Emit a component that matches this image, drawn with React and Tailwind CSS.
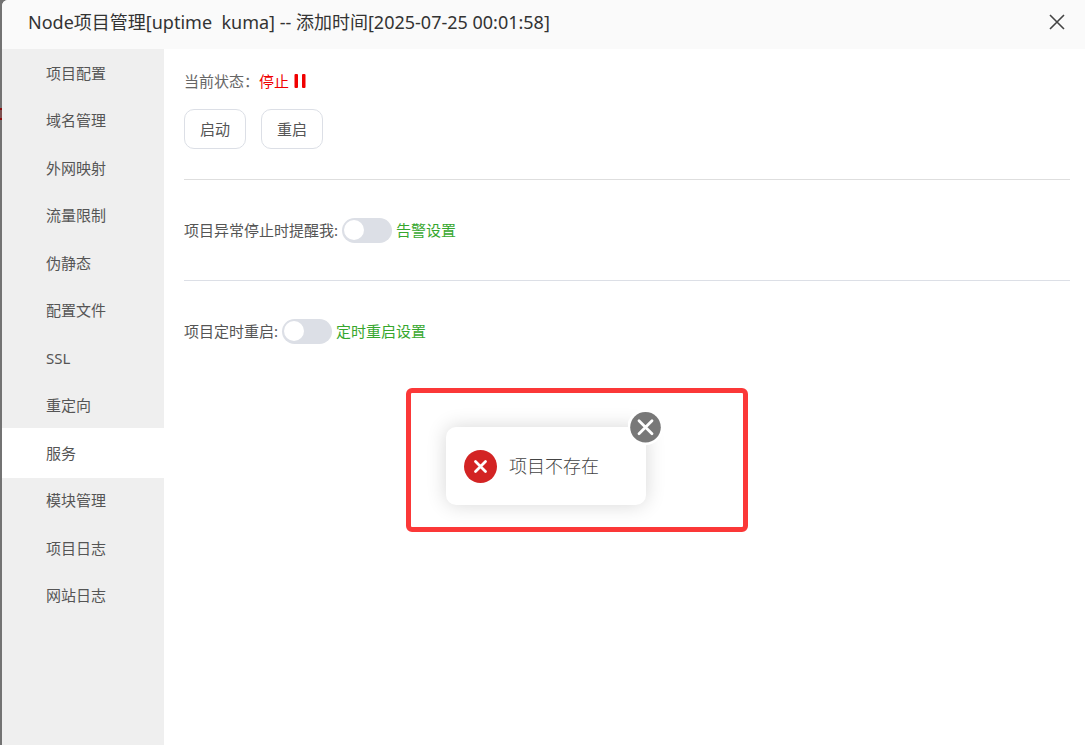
import { useState } from 'react';

const menuItems = [
    '项目配置',
    '域名管理',
    '外网映射',
    '流量限制',
    '伪静态',
    '配置文件',
    'SSL',
    '重定向',
    '服务',
    '模块管理',
    '项目日志',
    '网站日志',
];

function SwitchRow({ id, label, linkText }) {
    const [checked, setChecked] = useState(false);

    return (
        <div className="flex h-[100px] items-center gap-1">
            <label htmlFor={id}>{label}</label>
            <span className="relative flex h-[25px] w-[50px]">
                <input
                    id={id}
                    type="checkbox"
                    checked={checked}
                    onChange={(e) => setChecked(e.target.checked)}
                    className="peer h-full w-full cursor-pointer appearance-none rounded-full bg-[#dcdfe6] checked:bg-[#20a53a]"
                />
                <span className="pointer-events-none absolute top-[2px] left-[2px] h-5 w-5 rounded-full bg-white peer-checked:left-7" />
            </span>
            <a href="#" className="text-[#36a72e]">
                {linkText}
            </a>
        </div>
    );
}

function Toast({ message }) {
    return (
        <div
            role="alert"
            className="relative flex h-[78px] w-[200px] items-center gap-3 rounded-[10px] bg-white pl-[18px] shadow-[0_0_20px_rgba(0,0,0,0.16)]"
        >
            <svg viewBox="0 0 33 33" className="h-[33px] w-[33px]" aria-hidden="true">
                <circle cx="16.5" cy="16.5" r="16.5" fill="#d32424" />
                <path d="M11.5 11.5l10 10M21.5 11.5l-10 10" stroke="#fff" strokeWidth="2.8" strokeLinecap="round" />
            </svg>
            <span className="text-[18px] leading-6 font-light text-[#444]">{message}</span>
            <button type="button" aria-label="关闭提示" className="absolute -top-[18px] -right-[18px] cursor-pointer">
                <svg viewBox="0 0 36 36" className="h-9 w-9">
                    <circle cx="17.5" cy="18" r="18" fill="#fff" />
                    <circle cx="17.5" cy="18.3" r="15.3" fill="#787878" />
                    <path d="M11 11.8l13 13M24 11.8l-13 13" stroke="#fff" strokeWidth="2.8" strokeLinecap="round" />
                </svg>
            </button>
        </div>
    );
}

export default function App() {
    const [active, setActive] = useState('服务');

    return (
        <div className="relative min-h-screen bg-[#737373] pl-[2px] font-['Noto_Sans','Noto_Sans_CJK_SC',sans-serif] text-[15px] leading-5 text-[#555]">
            {/* edge of the page behind the dialog */}
            <span className="absolute top-[108px] left-0 h-3 w-[2px] border-y-2 border-[#8a1010] bg-[#7d5050]" />

            <div className="flex min-h-screen flex-col overflow-hidden rounded-tl-md bg-white">
                <header className="flex h-[49px] items-center justify-between bg-[#fafafa] pr-5 pb-[6px] pl-[26px]">
                    <h1 className="text-[18px] leading-6 whitespace-pre text-[#333]">
                        Node项目管理[uptime  kuma] -- 添加时间[2025-07-25 00:01:58]
                    </h1>
                    <button type="button" aria-label="关闭" className="cursor-pointer">
                        <svg viewBox="0 0 16 16" className="h-4 w-4">
                            <path d="M1 1l14 14M15 1L1 15" stroke="#444" strokeWidth="1.6" />
                        </svg>
                    </button>
                </header>

                <div className="flex flex-1">
                    <nav className="w-[162px] shrink-0 bg-[#efefef]">
                        <div className="grid h-[570px] auto-rows-fr">
                            {menuItems.map((item) => (
                                <button
                                    key={item}
                                    type="button"
                                    onClick={() => setActive(item)}
                                    className={`cursor-pointer pl-11 text-left ${active === item ? '-my-px bg-white' : ''}`}
                                >
                                    {item}
                                </button>
                            ))}
                        </div>
                    </nav>

                    <main className="flex-1 pt-[22px] pr-[15px] pl-5">
                        <p className="flex items-center text-[#666]">
                            当前状态：
                            <span className="flex items-center gap-[5px] text-[#f00000]">
                                停止
                                <svg viewBox="0 0 12 14" className="h-[14px] w-3" fill="currentColor" aria-hidden="true">
                                    <rect x="0.5" width="3.5" height="14" rx="1" />
                                    <rect x="8" width="3.5" height="14" rx="1" />
                                </svg>
                            </span>
                        </p>

                        <div className="mt-[18px] flex gap-[15px]">
                            <button type="button" className="h-10 w-[62px] cursor-pointer rounded-[10px] border border-[#dcdfe6]">
                                启动
                            </button>
                            <button type="button" className="h-10 w-[62px] cursor-pointer rounded-[10px] border border-[#dcdfe6]">
                                重启
                            </button>
                        </div>

                        <hr className="mt-[30px] border-[#dedede]" />
                        <SwitchRow id="stop-alert" label="项目异常停止时提醒我:" linkText="告警设置" />
                        <hr className="border-[#dcdfe6]" />
                        <SwitchRow id="timed-restart" label="项目定时重启:" linkText="定时重启设置" />
                    </main>
                </div>
            </div>

            {/* highlighted toast */}
            <div className="absolute top-[388px] left-[406px] flex h-[144px] w-[342px] rounded-md border-[5px] border-[#fb3838] pt-[34px] pl-[35px]">
                <Toast message="项目不存在" />
            </div>
        </div>
    );
}
